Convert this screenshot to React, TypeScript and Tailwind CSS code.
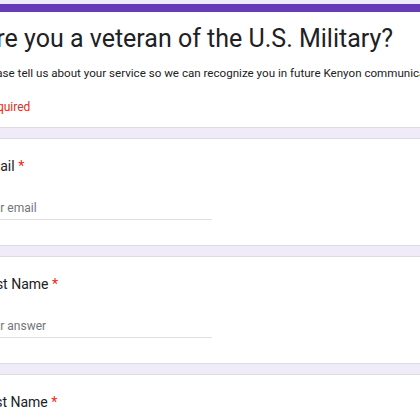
export default function App() {
  return (
    <div className="h-[420px] w-[420px] overflow-hidden bg-[#f0ebf8] font-['Roboto',sans-serif] text-[#202124]">
      <div className="ml-[-41px] flex w-[500px] flex-col gap-[10px] pt-[4px]">
        <div className="rounded-[8px] border border-[#dadce0] border-t-[8px] border-t-[#673ab7] bg-white px-[20px] pb-[12px] pt-[10px]">
          <h1 className="whitespace-nowrap text-[25px] leading-[34px] text-[#202124]">Are you a veteran of the U.S. Military?</h1>
          <p className="mt-[9px] whitespace-nowrap text-[11.6px] leading-[16px]">
            Please tell us about your service so we can recognize you in future Kenyon communications.
          </p>
          <p className="ml-[-5px] mt-[18px] text-[12px] leading-[16px] text-[#d93025]">* Required</p>
        </div>

        <Question label="Email" placeholder="Your email" />
        <Question label="First Name" placeholder="Your answer" />
        <Question label="Last Name" placeholder="Your answer" />
      </div>
    </div>
  )
}

function Question({ label, placeholder }: { label: string; placeholder: string }) {
  return (
    <div className="h-[108px] rounded-[8px] border border-[#dadce0] bg-white px-[20px] pt-[17px]">
      <div className="text-[14px] leading-[20px]">
        {label} <span className="text-[#d93025]">*</span>
      </div>
      <div className="mt-[24px] w-[232px] border-b border-[#e0e0e0] pb-[3px] text-[12px] leading-[16px] text-[#70757a]">
        {placeholder}
      </div>
    </div>
  )
}
